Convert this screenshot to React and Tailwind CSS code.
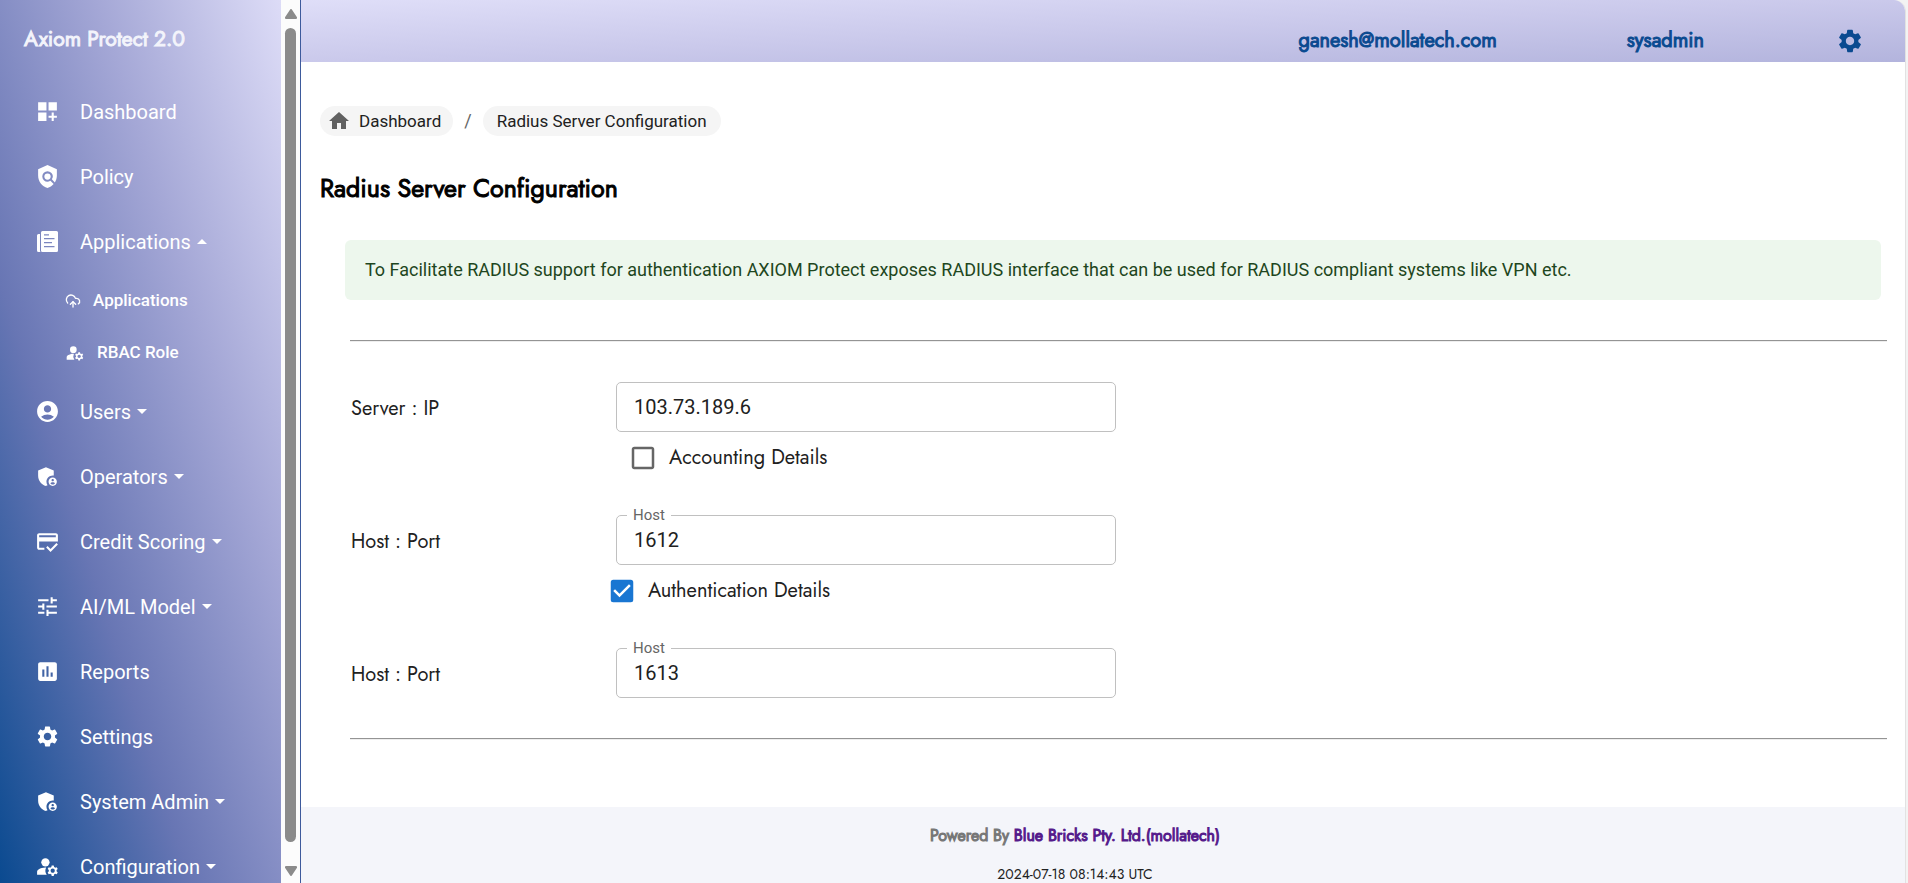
import { useState } from "react";
import {
  MdDashboardCustomize, MdPolicy, MdAccountCircle, MdAdminPanelSettings, MdCreditScore,
  MdTune, MdAssessment, MdSettings, MdManageAccounts, MdHome,
  MdCheckBox, MdCheckBoxOutlineBlank,
} from "react-icons/md";
import { CloudUpload } from "lucide-react";

function PressIcon({ className }) {
  return (
    <svg viewBox="-2 -2 25 25" className={className} fill="currentColor" aria-hidden="true">
      <path fillRule="evenodd" d="M5.500 0h14A1.500 1.500 0 0 1 21 1.500v18a1.500 1.500 0 0 1-1.500 1.500h-14A1.500 1.500 0 0 1 4 19.500v-18A1.500 1.500 0 0 1 5.500 0zM7 3.200v1.200h5V3.200zM7 7v1.200h10.500V7zM7 11v1.200h8V11zM7 15v1.200h10.500V15z" />
      <path d="M1.500 3H3v16.500c0 .6.200 1.100.5 1.500h-2A1.500 1.500 0 0 1 0 19.500v-15A1.500 1.500 0 0 1 1.500 3z" />
    </svg>
  );
}

const items = [
  { label: "Dashboard", Icon: MdDashboardCustomize },
  { label: "Policy", Icon: MdPolicy },
  {
    label: "Applications", Icon: PressIcon, caret: "up",
    children: [
      { label: "Applications", Icon: CloudUpload, size: "size-4" },
      { label: "RBAC Role", Icon: MdManageAccounts, size: "size-5" },
    ],
  },
  { label: "Users", Icon: MdAccountCircle, caret: "down" },
  { label: "Operators", Icon: MdAdminPanelSettings, caret: "down" },
  { label: "Credit Scoring", Icon: MdCreditScore, caret: "down" },
  { label: "AI/ML Model", Icon: MdTune, caret: "down" },
  { label: "Reports", Icon: MdAssessment },
  { label: "Settings", Icon: MdSettings },
  { label: "System Admin", Icon: MdAdminPanelSettings, caret: "down" },
  { label: "Configuration", Icon: MdManageAccounts, caret: "down" },
];

function Caret({ dir }) {
  return (
    <svg viewBox="0 0 10 5" className="ml-1.5 h-[5px] w-2.5" fill="currentColor" aria-hidden="true">
      <path d={dir === "up" ? "M0 5L5 0l5 5z" : "M0 0l5 5 5-5z"} />
    </svg>
  );
}

function Sidebar() {
  return (
    <aside className="flex shrink-0 border-r border-[#3d5a9c]">
      <div className="h-screen w-[281px] overflow-hidden bg-[linear-gradient(to_top_right,#0a4a90_0%,#6876b4_34%,#a4a7d6_67%,#dddcf7_100%)] text-white">
        <div className="px-6 pt-[25px] font-[Jost,Lato,sans-serif] text-[21px] leading-7 text-[#f3f4fb] [-webkit-text-stroke-width:1px]">Axiom Protect 2.0</div>
        <nav className="mt-[26px] font-[Roboto,sans-serif]">
          {items.map(({ label, Icon, caret, children }) => (
            <div key={label}>
              <a href="#" className="flex h-[65px] items-center pl-[35px] text-xl">
                <Icon className="size-[25px]" />
                <span className="ml-5">{label}</span>
                {caret && <Caret dir={caret} />}
              </a>
              {children && (
                <div className="pt-px">
                  {children.map(({ label: sub, Icon: SubIcon, size }) => (
                    <a key={sub} href="#" className="flex h-[52px] items-center gap-3 pl-[65px] text-[17px] font-medium">
                      <SubIcon className={size} />
                      <span>{sub}</span>
                    </a>
                  ))}
                </div>
              )}
            </div>
          ))}
        </nav>
      </div>
      <div className="flex h-screen w-[19px] flex-col items-center bg-[#fcfcfc] pt-[9px] pb-[7px] text-[#8b8b8b]" aria-hidden="true">
        <svg viewBox="0 0 12 10" className="h-2.5 w-3" fill="currentColor"><path d="M5 .7a1.200 1.200 0 0 1 2 0l4.800 7.300a1.200 1.200 0 0 1-1 2H1.200a1.200 1.200 0 0 1-1-2z" /></svg>
        <div className="mt-[9px] mb-6 w-[11px] flex-1 rounded-full bg-[#8b8b8b]" />
        <svg viewBox="0 0 12 10" className="h-2.5 w-3" fill="currentColor"><path d="M5 9.300a1.200 1.200 0 0 0 2 0l4.800-7.300a1.200 1.200 0 0 0-1-2H1.200a1.200 1.200 0 0 0-1 2z" /></svg>
      </div>
    </aside>
  );
}

function Field({ id, value, label }) {
  const [text, setText] = useState(value);
  return (
    <div className="relative w-[500px]">
      <input
        id={id}
        value={text}
        onChange={(e) => setText(e.target.value)}
        className="h-[50px] w-full rounded-[5px] border border-[#c0c0c0] bg-transparent px-[17px] font-[Roboto,sans-serif] text-xl text-[#212121] outline-none focus:border-[#1976d2]"
      />
      {label && (
        <label htmlFor={id} className="absolute -top-2.5 left-[11px] bg-white px-1.5 font-[Roboto,sans-serif] text-[15px] leading-5 text-[#666666]">{label}</label>
      )}
    </div>
  );
}

function Row({ id, name, value, label }) {
  return (
    <div className="flex items-center">
      <label htmlFor={id} className="w-[265px] shrink-0 pt-1 text-xl leading-7">{name}</label>
      <Field id={id} value={value} label={label} />
    </div>
  );
}

function Check({ label, initial, className }) {
  const [on, setOn] = useState(initial);
  return (
    <div className={`h-[83px] pt-[11px] ${className}`}>
      <label className="inline-flex items-center gap-[11px] text-xl leading-7">
        <input type="checkbox" checked={on} onChange={() => setOn(!on)} className="peer sr-only" />
        {on ? <MdCheckBox className="size-[30px] text-[#1976d2]" /> : <MdCheckBoxOutlineBlank className="size-[30px] text-[#666666]" />}
        <span>{label}</span>
      </label>
    </div>
  );
}

const Rule = () => <hr className="h-0.5 border-t border-b border-t-[#949494] border-b-[#eeeeee]" />;

export default function App() {
  return (
    <div className="flex h-screen overflow-hidden bg-[#f3f3f3] font-[Jost,Lato,sans-serif] text-[#212121]">
      <Sidebar />
      <div className="mr-0.5 flex min-w-0 flex-1 flex-col overflow-hidden rounded-tr-xl border-r border-[#e2e2e2] bg-white">
        <header className="flex h-[62px] shrink-0 items-center justify-end bg-[linear-gradient(to_bottom_right,#dfdef8,#cac9eb,#b3b4dd)] pt-5 pr-[41px] text-xl text-[#0a4a90]">
          <span className="[-webkit-text-stroke-width:1px]">ganesh@mollatech.com</span>
          <span className="ml-[130px] [-webkit-text-stroke-width:1px]">sysadmin</span>
          <button type="button" aria-label="Settings" className="ml-[132px]"><MdSettings className="size-7" /></button>
        </header>
        <main className="flex-1 pr-[18px] pl-[19px]">
          <nav aria-label="Breadcrumb" className="mt-11 flex items-center font-[Roboto,sans-serif] text-[17px] leading-[30px]">
            <a href="#" className="flex items-center rounded-full bg-[#f5f5f5] pr-3 pl-[7px]">
              <MdHome className="mr-2 size-6 text-[#616161]" />Dashboard
            </a>
            <span className="mx-[11px] text-lg leading-[30px] text-[#666666]">/</span>
            <a href="#" className="rounded-full bg-[#f5f5f5] px-3.5">Radius Server Configuration</a>
          </nav>
          <h1 className="mt-[34px] text-[25px] leading-9 text-black [-webkit-text-stroke-width:1px]">Radius Server Configuration</h1>
          <div role="status" className="mt-[34px] mr-1.5 ml-[25px] rounded-md bg-[#edf7ed] px-5 py-[18px] font-[Roboto,sans-serif] text-lg leading-6 text-[#1e4620]">
            To Facilitate RADIUS support for authentication AXIOM Protect exposes RADIUS interface that can be used for RADIUS compliant systems like VPN etc.
          </div>
          <div className="mt-10 ml-[30px]">
            <Rule />
            <form className="py-10 pl-px">
              <Row id="server-ip" name="Server : IP" value="103.73.189.6" />
              <Check label="Accounting Details" initial={false} className="pl-[277px]" />
              <Row id="accounting-port" name="Host : Port" value="1612" label="Host" />
              <Check label="Authentication Details" initial={true} className="pl-64" />
              <Row id="authentication-port" name="Host : Port" value="1613" label="Host" />
            </form>
            <Rule />
          </div>
        </main>
        <footer className="h-[76px] shrink-0 overflow-hidden bg-[#f4f5fa] pt-[17px] pr-14 text-center">
          <p className="text-base leading-6 text-[#777777] [-webkit-text-stroke-width:1px]">
            Powered By <a href="#" className="text-[#551a8b]">Blue Bricks Pty. Ltd.(mollatech)</a>
          </p>
          <p className="mt-4 text-sm leading-5">2024-07-18 08:14:43 UTC</p>
        </footer>
      </div>
    </div>
  );
}
